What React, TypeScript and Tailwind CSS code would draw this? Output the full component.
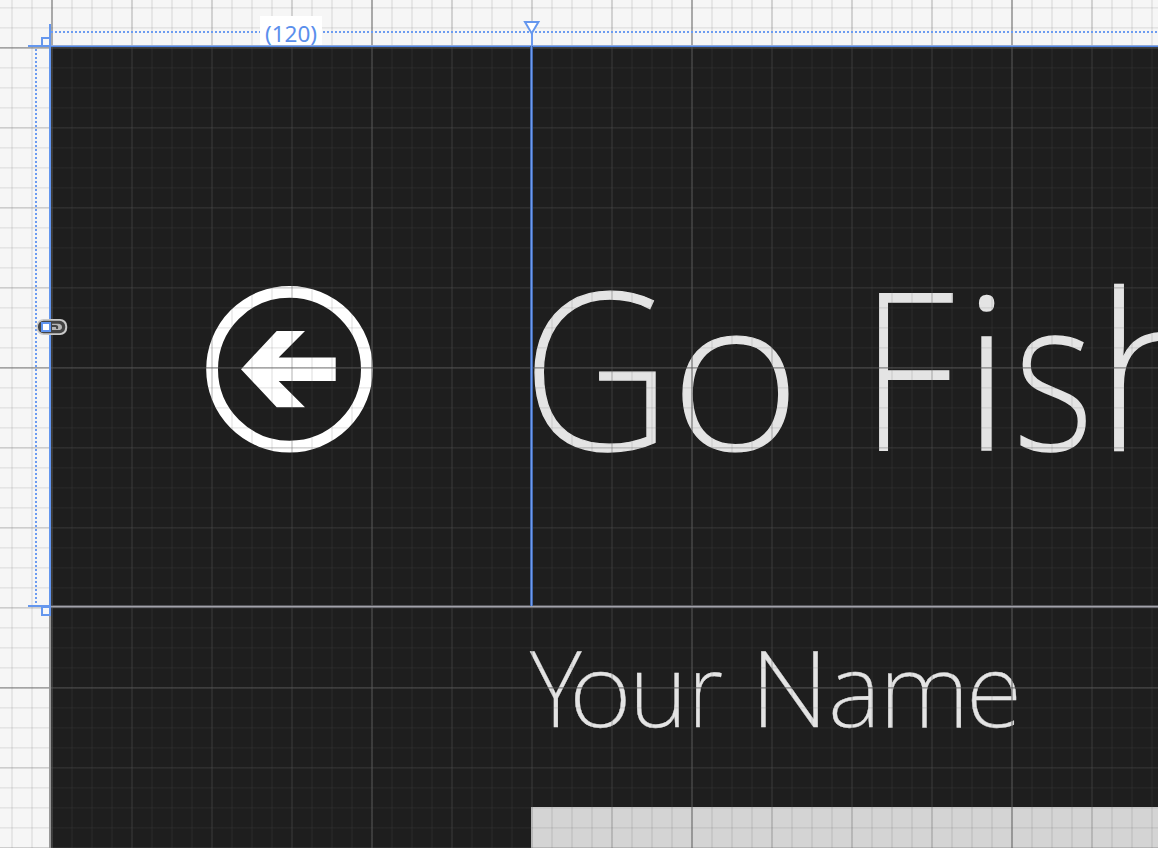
function BackButton() {
  return (
    <button aria-label="Back" className="block h-[168px] w-[168px]">
      <svg viewBox="0 0 168 168" className="block h-full w-full">
        <circle cx="84.5" cy="84.2" r="77.4" fill="none" stroke="#fff" strokeWidth="11.8" />
        <path
          d="M36 84.2 71.7 45.9H100L73.7 72.4H130.7V95.9H73.7L100 122.2H71.7Z"
          fill="#fff"
        />
      </svg>
    </button>
  );
}

function Title() {
  return (
    <h1 className="flex h-[220px] text-[219px] leading-[220px] font-extralight whitespace-pre text-[#e4e4e4] [-webkit-text-stroke:1.3px_#e4e4e4]">
      <span className="w-[147.8px] shrink-0 origin-left scale-x-[0.946]">G</span>
      <span className="w-[128px] shrink-0 origin-[0_195px] scale-x-[1.03] scale-y-[0.96]">o</span>
      <span className="w-[63.2px] shrink-0"> </span>
      <span className="w-[101.7px] shrink-0 origin-left scale-x-[0.848] [-webkit-text-stroke:2px_#e4e4e4]">F</span>
      <span className="w-[51.4px] shrink-0 origin-[0_195px] scale-y-[0.97] [-webkit-text-stroke:1.8px_#e4e4e4]">i</span>
      <span className="w-[81.3px] shrink-0 origin-[0_195px] scale-x-[0.78] scale-y-[0.96] [-webkit-text-stroke:1.8px_#e4e4e4]">s</span>
      <span className="w-[120px] shrink-0">h</span>
    </h1>
  );
}

function NameLabel() {
  return (
    <p className="flex h-[105px] text-[105px] leading-[105px] font-extralight whitespace-pre text-[#e4e4e4] [-webkit-text-stroke:0.35px_#e4e4e4]">
      <span className="w-[38.7px] shrink-0 origin-left scale-x-[0.95]">Y</span>
      <span className="w-[60px] shrink-0 origin-[0_93px] scale-x-[1.03] scale-y-[0.96]">o</span>
      <span className="w-[58.9px] shrink-0 origin-[0_93px] scale-x-[0.96] scale-y-[0.96]">u</span>
      <span className="w-[36px] shrink-0 origin-[0_93px] scale-x-[0.87] scale-y-[0.96]">r</span>
      <span className="w-[26px] shrink-0"> </span>
      <span className="w-[78.1px] shrink-0 origin-left scale-x-[1.06]">N</span>
      <span className="w-[51.2px] shrink-0 origin-[0_93px] scale-x-[0.964] scale-y-[0.96]">a</span>
      <span className="w-[86.9px] shrink-0 origin-[0_93px] scale-x-[0.99] scale-y-[0.96]">m</span>
      <span className="w-[55px] shrink-0 origin-[0_93px] scale-x-[0.98] scale-y-[0.96]">e</span>
    </p>
  );
}

function SnapGrid() {
  return (
    <div className="pointer-events-none absolute inset-0">
      <div className="absolute inset-0 bg-[linear-gradient(90deg,rgba(90,90,90,0.1)_2px,transparent_2px)] bg-[length:20px_20px] bg-[position:11px_0]" />
      <div className="absolute inset-0 bg-[linear-gradient(180deg,rgba(90,90,90,0.11)_1px,rgba(90,90,90,0.07)_1px,rgba(90,90,90,0.07)_2px,transparent_2px)] bg-[length:20px_20px] bg-[position:0_7px]" />
      <div className="absolute inset-0 bg-[linear-gradient(90deg,rgba(90,90,90,0.15)_2px,transparent_2px)] bg-[length:80px_80px] bg-[position:51px_0]" />
      <div className="absolute inset-0 bg-[linear-gradient(180deg,rgba(90,90,90,0.17)_1px,rgba(90,90,90,0.1)_1px,rgba(90,90,90,0.1)_2px,transparent_2px)] bg-[length:80px_80px] bg-[position:0_47px]" />
      <div className="absolute inset-0 bg-[linear-gradient(90deg,rgba(90,90,90,0.34)_2px,transparent_2px)] bg-[length:320px_320px] bg-[position:51px_0]" />
      <div className="absolute inset-0 bg-[linear-gradient(180deg,rgba(90,90,90,0.36)_1px,rgba(90,90,90,0.25)_1px,rgba(90,90,90,0.25)_2px,transparent_2px)] bg-[length:320px_320px] bg-[position:0_47px]" />
    </div>
  );
}

function Adorners() {
  return (
    <div className="pointer-events-none absolute inset-0">
      {/* margin rulers */}
      <div className="absolute top-[31px] right-0 left-[51px] h-[2px] bg-[repeating-linear-gradient(90deg,#6d9cf0_0_2px,transparent_2px_4px)]" />
      <div className="absolute top-[49px] left-[35px] h-[556px] w-[2px] bg-[repeating-linear-gradient(180deg,#6d9cf0_0_2px,transparent_2px_4px)]" />
      <div className="absolute top-[16px] left-[260px] h-[31px] w-[62px] bg-white text-center font-['Noto_Sans','Open_Sans',sans-serif] text-[22.5px] leading-[36px] text-[#5b8fec]">
        (120)
      </div>

      {/* selected row edges */}
      <div className="absolute top-[45px] right-0 left-[50px] h-[1px] bg-[#8fa9d8]" />
      <div className="absolute top-[46px] right-0 left-[50px] h-[1px] bg-[#4f85e6]" />
      <div className="absolute top-[605px] right-0 left-[51px] h-[1px] bg-[#55555a]" />
      <div className="absolute top-[606px] right-0 left-[51px] h-[1px] bg-[#a3a3aa]" />
      <div className="absolute top-[607px] right-0 left-[51px] h-[1px] bg-[#6c6c73]" />
      <div className="absolute top-[607px] bottom-0 left-[49px] w-[2px] bg-[#999]" />
      <div className="absolute top-[24px] left-[49px] h-[584px] w-[2px] bg-[#6396ee]" />

      {/* column guide */}
      <div className="absolute top-[33px] left-[531px] h-[13px] w-[2px] bg-[#6d9af0]" />
      <div className="absolute top-[46px] left-[530px] h-[560px] w-[3px] bg-[linear-gradient(90deg,#4268ad_1px,#6d9af0_1px,#6d9af0_2px,#4268ad_2px)]" />
      <svg className="absolute top-[18px] left-[520px] h-[20px] w-[24px]" viewBox="0 0 24 20">
        <path d="M5 4H18.4L11.7 15.4Z" fill="#fff" stroke="#6597ee" strokeWidth="2" />
      </svg>

      {/* row handles */}
      <div className="absolute top-[45px] left-[28px] h-[2px] w-[22px] bg-[#6597ee]" />
      <div className="absolute top-[37px] left-[41px] h-[10px] w-[10px] border-2 border-[#6597ee] bg-[#f8f8f8]" />
      <div className="absolute top-[605px] left-[28px] h-[2px] w-[23px] bg-[#6597ee]" />
      <div className="absolute top-[606px] left-[41px] h-[10px] w-[10px] border-2 border-[#6597ee] bg-[#f8f8f8]" />

      {/* link toggle */}
      <svg className="absolute top-[317px] left-[35px] h-[20px] w-[34px]" viewBox="0 0 34 20">
        <rect x="1.6" y="2" width="30.6" height="16" rx="7" fill="#c9c9c9" />
        <rect x="3" y="3.8" width="27.2" height="12.4" rx="5.6" fill="#444" />
        <path d="M17 6.8H23Q27 7.2 27 10.2T23 13H17Z" fill="#b5b5b5" />
        <path d="M17 9H20.5Q22.5 9 22 11" fill="none" stroke="#444" strokeWidth="2.2" strokeLinecap="round" />
        <rect x="7" y="6" width="8" height="8" fill="#fff" stroke="#5f93ee" strokeWidth="2" />
      </svg>
    </div>
  );
}

export default function App() {
  return (
    <main className="relative h-screen w-full overflow-hidden bg-[#f6f6f6] pt-[46px] pl-[51px] font-['Noto_Sans','Open_Sans',sans-serif]">
      <div className="h-full w-full overflow-hidden bg-[#1e1e1e]">
        <header className="flex h-[560px]">
          <div className="w-[471px] shrink-0 pt-[239px] pl-[154px]">
            <BackButton />
          </div>
          <div className="shrink-0 pt-[208.6px]">
            <Title />
          </div>
        </header>
        <section className="flex flex-col">
          <div className="h-[201px] shrink-0 pt-[28.2px] pl-[479.3px]">
            <NameLabel />
          </div>
          <div className="ml-[480px] h-[60px] shrink-0 bg-[#d4d4d4]" />
        </section>
      </div>
      <SnapGrid />
      <Adorners />
    </main>
  );
}
